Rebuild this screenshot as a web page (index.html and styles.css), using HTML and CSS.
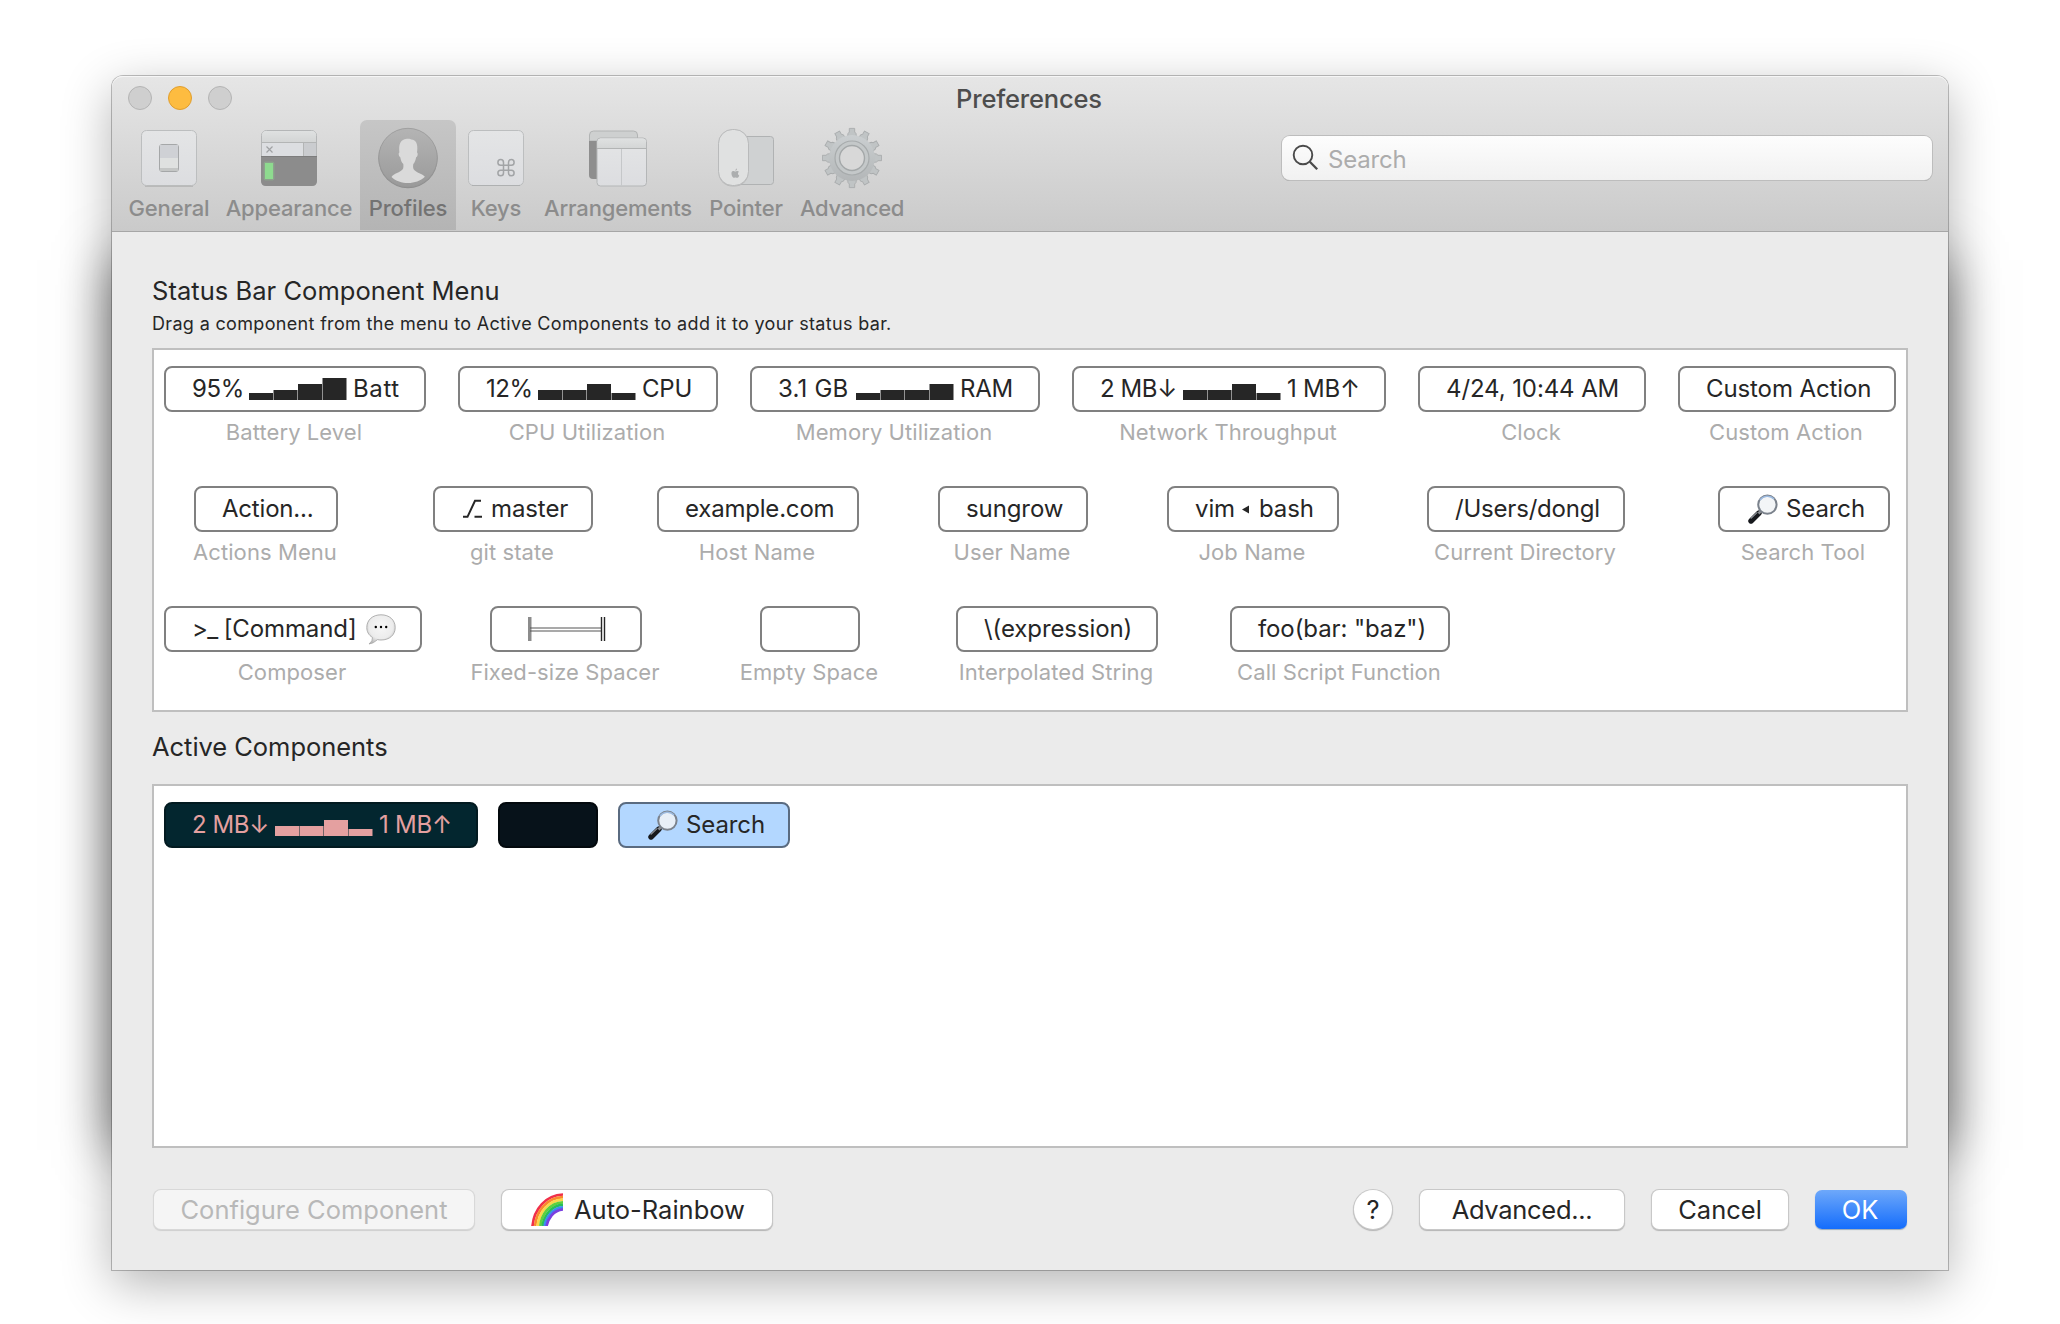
FILE: index.html
```html
<!DOCTYPE html>
<html lang="en">
<head>
<meta charset="utf-8">
<title>Preferences</title>
<link rel="stylesheet" href="styles.css">
</head>
<body>
<svg width="0" height="0" class="defs" aria-hidden="true">
  <defs>
    <linearGradient id="plate" x1="0" y1="0" x2="0" y2="1"><stop offset="0" stop-color="#e4e5e6"/><stop offset="1" stop-color="#dcdde0"/></linearGradient>
    <linearGradient id="bar" x1="0" y1="0" x2="0" y2="1"><stop offset="0" stop-color="#dfe1e1"/><stop offset="1" stop-color="#d3d5d5"/></linearGradient>
    <linearGradient id="disc" x1="0" y1="0" x2="0" y2="1"><stop offset="0" stop-color="#b4b4b4"/><stop offset="1" stop-color="#9a9a9a"/></linearGradient>
    <linearGradient id="steel" gradientUnits="userSpaceOnUse" x1="0" y1="-30" x2="0" y2="30"><stop offset="0" stop-color="#ced2d4"/><stop offset="1" stop-color="#b0b3b4"/></linearGradient>
    <radialGradient id="bubble" cx=".5" cy=".4" r=".6"><stop offset="0" stop-color="#f7f7f7"/><stop offset=".7" stop-color="#ececec"/><stop offset="1" stop-color="#bdbdbd"/></radialGradient>
    <path id="tooth" d="M-4.600-20-4-24.500-2.700-26v-3.600h5.400v3.600L4-24.500 4.600-20z" fill="#c0c4c5" stroke="#a9acad" stroke-width=".9"/>
    <symbol id="lens" viewBox="0 0 30 30">
      <path d="M3 27 11 19" stroke="#17191d" stroke-width="5.400" stroke-linecap="round"/>
      <path d="M3 24.200 9 18.600" stroke="#8b9097" stroke-width="1.200" stroke-linecap="round"/>
      <path d="M10.500 19.500 13 17" stroke="#8a8d92" stroke-width="2.600"/>
      <circle cx="19.400" cy="10.600" r="9.200" fill="#f1f3f6" fill-opacity=".85" stroke="#7b828c" stroke-width="2"/>
      <path d="M12 6A9.200 9.200 0 0 1 26 5" fill="none" stroke="#9dbbe0" stroke-width="1.600"/>
    </symbol>
  </defs>
</svg>
<div class="backdrop"></div>
<main class="window">
  <header class="toolbar">
    <div class="titlebar">
      <div class="lights"><i class="light"></i><i class="light amber"></i><i class="light"></i></div>
      <h1 class="title">Preferences</h1>
    </div>
    <div class="tools">
      <nav class="tabs">
        <div class="tab general">
          <svg width="60" height="64" viewBox="0 0 60 64"><rect x="2.500" y="4.500" width="55" height="55" rx="5" fill="url(#plate)" stroke="#bcbebf"/><path d="M6 60.300h48" stroke="#b3b3b3"/><rect x="20.500" y="18.500" width="19" height="27" rx="2.500" fill="#dfe1e0" stroke="#a5a7a8"/><path d="M21 19h18v13H21z" fill="#cfd1d5"/><path d="M21 42h18v3H21z" fill="#c4c6c5"/></svg>
          <span>General</span>
        </div>
        <div class="tab appearance">
          <svg width="60" height="64" viewBox="0 0 60 64"><rect x="2.500" y="4.500" width="55" height="55" rx="5" fill="#dcdee1" stroke="#b4b6b7"/><path d="M3 16V9q0-4 4-4h46q4 0 4 4v7z" fill="url(#bar)"/><path d="M3 16.500h54" stroke="#b3b5b5"/><path d="M44.500 17h12.500v13H44.500z" fill="#cacccf"/><path d="M44.500 17v13" stroke="#b3b5b5"/><path d="m7.500 20.500 6 6m0-6-6 6" stroke="#a0a2a4" stroke-width="1.200"/><path d="M2 30h56v25q0 5-5 5H7q-5 0-5-5z" fill="#8c8c8c"/><path d="M2 30.500h56" stroke="#7d7d7d"/><rect x="4.500" y="35.500" width="11" height="19" rx="2" fill="#8fe08f" opacity=".25"/><path d="M6 37h8v16H6z" fill="#8edb8f"/></svg>
          <span>Appearance</span>
        </div>
        <div class="tab profiles">
          <svg width="60" height="64" viewBox="0 0 60 64"><circle cx="30" cy="32.600" r="29.600" fill="#8e8e8e"/><circle cx="30" cy="31.600" r="29.300" fill="url(#disc)" stroke="#989898" stroke-width=".8"/><path d="M13.500 51c2-3.500 9-4.500 11.200-7.700.9-1.300.8-3.600.6-5.300-1.600-1.400-2.600-4-3-6.800-1.600-.5-2.200-4.200-.9-4.700-.8-7 .2-13 7.500-13.800 2.900-.2 4 .6 4.900.9 5.500.6 6.200 7 5.200 12.900 1.300.6.700 4.300-.9 4.700-.4 2.700-1.300 5.300-2.800 6.700-.3 1.900-.4 4.200.5 5.500 2.200 3.200 8.900 4.200 11.100 7.400-8.500 8.300-24.800 8.300-33.400.2z" fill="#dadada"/></svg>
          <span>Profiles</span>
        </div>
        <div class="tab keys">
          <svg width="60" height="64" viewBox="0 0 60 64"><rect x="2.500" y="4.500" width="55" height="55" rx="5" fill="url(#plate)" stroke="#bcbebf"/><path d="M6 59.500h48" stroke="#aeb0b1"/><path d="M37.500 39.200h5v5h-5zM37.500 39.200h-2.800a2.800 2.800 0 1 1 2.800-2.800zM42.500 39.200v-2.800a2.800 2.800 0 1 1 2.800 2.800zM42.500 44.200h2.800a2.800 2.800 0 1 1-2.800 2.800zM37.500 44.200v2.800a2.800 2.800 0 1 1-2.800-2.800z" fill="none" stroke="#a2a4a6" stroke-width="1.500"/></svg>
          <span>Keys</span>
        </div>
        <div class="tab arrangements">
          <svg width="60" height="64" viewBox="0 0 60 64"><path d="M1.500 15V9q0-4 4-4h40q4 0 4 4v6z" fill="#ced0d0" stroke="#b2b4b4"/><path d="M1 15h12v38H5q-4 0-4-4z" fill="#8e8e8e"/><rect x="9" y="12" width="49.500" height="48" rx="3.500" fill="url(#plate)" stroke="#b4b6b7"/><path d="M9.500 22.500V16q0-3.500 3.500-3.500h41.500q3.500 0 3.500 3.500v6.500z" fill="url(#bar)"/><path d="M9 22.500h49.500" stroke="#b2b4b4"/><path d="M33.500 23v36.500" stroke="#c5c7c9"/></svg>
          <span>Arrangements</span>
        </div>
        <div class="tab pointer">
          <svg width="60" height="64" viewBox="0 0 60 64"><rect x="22" y="10.500" width="35.500" height="48" rx="3" fill="#cfd1d2" stroke="#b0b2b3"/><rect x="2.500" y="3.500" width="30" height="57" rx="14" fill="#b8b8b8"/><rect x="2.500" y="3.500" width="30" height="56" rx="14" fill="#e0e1e1" stroke="#b9babb"/><path transform="translate(1 -.5)" d="M18.400 45.200c0-1.200.7-2 1.600-2.200.1 1.100-.6 2-1.600 2.200zM16.300 45.500c.9 0 1.300.5 2 .5s1.200-.5 2.100-.5c.6 0 1.200.3 1.500.8-1.500 1-1.200 3 .3 3.600-.4 1.200-1.200 2.400-2.100 2.400-.7 0-.9-.4-1.700-.4s-1 .4-1.700.4c-1.600 0-3.900-6.800-.4-6.800z" fill="#acaeaf"/></svg>
          <span>Pointer</span>
        </div>
        <div class="tab advanced">
          <svg width="60" height="64" viewBox="0 0 60 64"><g transform="translate(30 32)"><use href="#tooth"/><use href="#tooth" transform="rotate(30)"/><use href="#tooth" transform="rotate(60)"/><use href="#tooth" transform="rotate(90)"/><use href="#tooth" transform="rotate(120)"/><use href="#tooth" transform="rotate(150)"/><use href="#tooth" transform="rotate(180)"/><use href="#tooth" transform="rotate(210)"/><use href="#tooth" transform="rotate(240)"/><use href="#tooth" transform="rotate(270)"/><use href="#tooth" transform="rotate(300)"/><use href="#tooth" transform="rotate(330)"/><circle r="23" fill="url(#steel)"/><circle r="17" fill="#c4c8c9" stroke="#a7abac" stroke-width="1.200"/><circle r="12.500" fill="#d8d8d8" stroke="#a4a8a9" stroke-width="1.400"/></g></svg>
          <span>Advanced</span>
        </div>
      </nav>
      <div class="search">
        <svg width="28" height="28" viewBox="0 0 28 28" fill="none" stroke="#4a4a4a" stroke-width="1.900"><circle cx="11" cy="11" r="9.300"/><path d="m17.800 17.800 7.400 7.400" stroke-width="2.300"/></svg>
        <span>Search</span>
      </div>
    </div>
  </header>
  <section class="content">
    <h2 class="heading">Status Bar Component Menu</h2>
    <p class="hint">Drag a component from the menu to Active Components to add it to your status bar.</p>
    <div class="well menu">
      <div class="row first">
        <div class="cell"><div class="chip meter w262"><span class="lead batt">95%</span><svg class="spark" viewBox="0 0 98 22"><path d="M0 15h24v7H0zM24.500 12h24v10h-24zM49 6h24v16H49zM73.500 0h24v22h-24z"/></svg><span class="wide">Batt</span></div><p class="cap">Battery Level</p></div>
        <div class="cell"><div class="chip meter w260"><span class="lead cpu">12%</span><svg class="spark" viewBox="0 0 98 22"><path d="M0 12h24v10H0zM24.500 12h24v10h-24zM49 6h24v16H49zM73.500 15h24v7h-24z"/></svg><span>CPU</span></div><p class="cap">CPU Utilization</p></div>
        <div class="cell"><div class="chip meter w290"><span class="lead ram">3.1 GB</span><svg class="spark" viewBox="0 0 98 22"><path d="M0 15h24v7H0zM24.500 12h24v10h-24zM49 12h24v10H49zM73.500 6h24v16h-24z"/></svg><span>RAM</span></div><p class="cap">Memory Utilization</p></div>
        <div class="cell"><div class="chip meter w314"><span class="lead net">2 MB↓</span><svg class="spark" viewBox="0 0 98 22"><path d="M0 12h24v10H0zM24.500 12h24v10h-24zM49 6h24v16H49zM73.500 15h24v7h-24z"/></svg><span>1 MB↑</span></div><p class="cap">Network Throughput</p></div>
        <div class="cell"><div class="chip w228">4/24, 10:44 AM</div><p class="cap">Clock</p></div>
        <div class="cell"><div class="chip w218">Custom Action</div><p class="cap">Custom Action</p></div>
      </div>
      <div class="row second">
        <div class="cell"><div class="chip tight w144">Action...</div><p class="cap">Actions Menu</p></div>
        <div class="cell"><div class="chip w160"><svg class="branch" width="21" height="20" viewBox="0 0 21 20" fill="none" stroke="#262626" stroke-width="2"><path d="M1 17.800h4.500L13 1.800h6M12.500 17.800H20"/></svg><span>master</span></div><p class="cap">git state</p></div>
        <div class="cell"><div class="chip tight w202">example.com</div><p class="cap">Host Name</p></div>
        <div class="cell"><div class="chip w150">sungrow</div><p class="cap">User Name</p></div>
        <div class="cell"><div class="chip w172"><span>vim</span><svg class="back" width="7" height="9" viewBox="0 0 7 9"><path d="M0 4.500 7 .5v8z" fill="#262626"/></svg><span>bash</span></div><p class="cap">Job Name</p></div>
        <div class="cell"><div class="chip tight w198">/Users/dongl</div><p class="cap">Current Directory</p></div>
        <div class="cell"><div class="chip w172"><svg class="glass" width="30" height="30"><use href="#lens"/></svg><span>Search</span></div><p class="cap">Search Tool</p></div>
      </div>
      <div class="row third">
        <div class="cell"><div class="chip w258"><span class="prompt">&gt;_</span><span>[Command]</span><svg class="talk" width="30" height="31" viewBox="0 0 30 31"><path d="M3 30q4-3 3.500-6.500C2.500 21 .8 17.500.8 13.500.8 6 6.500.8 15 .8S29.200 6 29.200 13.500 23.500 26 15 26q-2 0-3.500-.4Q7.500 29.500 3 30z" fill="url(#bubble)" stroke="#a8a8a8" stroke-width=".9"/><circle cx="9.800" cy="13" r="1.200"/><circle cx="15" cy="13" r="1.200"/><circle cx="20.200" cy="13" r="1.200"/></svg></div><p class="cap">Composer</p></div>
        <div class="cell"><div class="chip w152"><svg class="spacer" width="78" height="26" viewBox="0 0 78 26"><path d="M0 1h3.500v24H0z" fill="#8c8c8c"/><path d="M2 12h72M2 15h72" stroke="#555" stroke-width="1.200"/><path d="M73.500 1v24M76.500 1v24" stroke="#262626" stroke-width="1.400"/></svg></div><p class="cap">Fixed-size Spacer</p></div>
        <div class="cell"><div class="chip w100"></div><p class="cap">Empty Space</p></div>
        <div class="cell"><div class="chip w202">\(expression)</div><p class="cap">Interpolated String</p></div>
        <div class="cell"><div class="chip w220">foo(bar: "baz")</div><p class="cap">Call Script Function</p></div>
      </div>
    </div>
    <h2 class="heading active-heading">Active Components</h2>
    <div class="well active">
      <div class="chip meter w314 teal"><span class="lead net">2 MB↓</span><svg class="spark" viewBox="0 0 98 22"><path d="M0 12h24v10H0zM24.500 12h24v10h-24zM49 6h24v16H49zM73.500 15h24v7h-24z"/></svg><span>1 MB↑</span></div>
      <div class="chip w100 night"></div>
      <div class="chip w172 picked"><svg class="glass" width="30" height="30"><use href="#lens"/></svg><span>Search</span></div>
    </div>
    <footer class="actions">
      <button class="btn configure" disabled>Configure Component</button>
      <button class="btn rainbow"><svg width="32" height="33" viewBox="0 0 32 33" fill="none" stroke-width="2.700"><path d="M1.500 33C3 16 15 2 32 1.500" stroke="#f0304a"/><path d="M4.100 33C5.500 18 16 4.600 32 4.100" stroke="#f98a2c"/><path d="M6.700 33C8 20 17 7.200 32 6.700" stroke="#fbd64a"/><path d="M9.300 33C10.500 22 18 9.800 32 9.300" stroke="#5fd03c"/><path d="M11.600 33C13 23 20 12.400 32 11.900" stroke="#27c057"/><path d="M13.600 33C15 25 21 14.900 32 14.400" stroke="#3b8df0"/><path d="M15.500 33C17 26 22 17.200 32 16.400" stroke="#7a3fe0"/></svg><span>Auto-Rainbow</span></button>
      <button class="btn help">?</button>
      <button class="btn more">Advanced...</button>
      <button class="btn cancel">Cancel</button>
      <button class="btn ok">OK</button>
    </footer>
  </section>
</main>
</body>
</html>
```
FILE: styles.css
```css
* { box-sizing: border-box; margin: 0; padding: 0; }
body {
  position: relative;
  width: 2060px;
  height: 1324px;
  padding: 76px 112px 0;
  overflow: hidden;
  background: #fff;
  color: #262626;
  font-family: Inter, "Liberation Sans", sans-serif;
}
svg { display: block; flex: none; }
.defs { position: absolute; }
.backdrop {
  position: absolute;
  left: 112px;
  top: 260px;
  width: 1836px;
  height: 890px;
  box-shadow: 0 0 50px rgba(0, 0, 0, .55);
}
.window {
  position: relative;
  width: 1836px;
  height: 1194px;
  border-radius: 11px 11px 0 0;
  background: #ebebeb;
  box-shadow: 0 0 0 1px rgba(0, 0, 0, .24), 0 14px 50px rgba(0, 0, 0, .3);
}
.toolbar {
  height: 156px;
  border-radius: 11px 11px 0 0;
  border-bottom: 1px solid #a6a6a6;
  background: linear-gradient(#e6e6e6, #cacaca);
  box-shadow: inset 0 1px #f6f6f6;
}
.titlebar { position: relative; height: 44px; }
.lights { display: flex; gap: 16px; padding: 10px 16px; }
.light { width: 24px; height: 24px; border: 1px solid #b4b4b4; border-radius: 50%; background: #cfcfcf; }
.amber { border-color: #e09e2e; background: #fdbc40; }
.title { position: absolute; inset: 0; padding-right: 2px; text-align: center; font-size: 25.5px; line-height: 46px; font-weight: 450; letter-spacing: -.18px; color: #4d4d4d; }
.tools { display: flex; justify-content: space-between; padding: 0 16px 0 8px; }
.tabs { display: flex; }
.tab { display: flex; flex-direction: column; align-items: center; height: 110px; padding-top: 6px; border-radius: 7px 7px 0 0; font-size: 22px; font-weight: 500; line-height: 28px; letter-spacing: -.15px; color: #8c8c8c; white-space: nowrap; }
.tab svg { margin-bottom: 4px; }
.general { width: 98px; }
.appearance { width: 142px; }
.profiles { width: 96px; background: linear-gradient(#c6c6c6, #b4b4b4); color: #737373; }
.keys { width: 80px; }
.arrangements { width: 164px; }
.pointer { width: 92px; }
.advanced { width: 120px; letter-spacing: -.3px; }
.search { display: flex; align-items: center; width: 650px; height: 44px; margin-top: 16px; padding-left: 10px; gap: 8px; border-radius: 8px; background: linear-gradient(#fdfdfd, #f1f1f1); box-shadow: 0 0 0 1px #bdbdbd, 0 1px 0 0 #9d9d9d; font-size: 24px; letter-spacing: -.2px; color: #acacac; }
.search span { padding-top: 2px; }
.content { padding: 43px 40px 0; }
.heading { height: 32px; font-size: 25.5px; font-weight: 400; line-height: 32px; letter-spacing: .04px; }
.hint { height: 24px; margin-top: 4px; font-size: 18px; line-height: 26px; letter-spacing: .33px; }
.well { border: 2px solid #bfbfbf; background: #fff; }
.menu { height: 364px; margin-top: 13px; padding: 16px 10px; }
.row { display: grid; height: 120px; white-space: nowrap; }
.first { grid-template-columns: 262px 260px 290px 314px 228px 218px; gap: 32px; }
.second { grid-template-columns: 204px 290px 200px 310px 170px 376px 180px; }
.third { grid-template-columns: 258px 288px 200px 294px 272px; }
.cell { display: flex; flex-direction: column; align-items: center; }
.chip { display: flex; align-items: center; gap: 7px; flex: none; height: 46px; padding-left: 26px; border: 2px solid #808080; border-radius: 8px; font-size: 24px; line-height: 42px; letter-spacing: -.1px; white-space: nowrap; }
.cap { height: 28px; margin-top: 6px; padding-right: 2px; font-size: 22px; line-height: 28px; letter-spacing: .08px; color: #acacac; }
.meter { gap: 6px; letter-spacing: -.2px; }
.tight { letter-spacing: -.2px; }
.wide { letter-spacing: .6px; }
.lead { margin-right: -6px; letter-spacing: -.4px; }
.batt { width: 57px; }
.cpu { width: 52px; }
.ram { width: 78px; letter-spacing: .2px; }
.net { width: 83px; }
.spark { width: 98px; height: 22px; fill: #262626; }
.branch { margin: 0 1px 0 1px; }
.back { margin-right: 3px; }
.glass { margin: 0 1px 0 2px; }
.prompt { margin-right: -1px; letter-spacing: -.6px; }
.talk { margin-left: 2px; }
.w100 { width: 100px; } .w144 { width: 144px; } .w150 { width: 150px; } .w152 { width: 152px; }
.w160 { width: 160px; } .w172 { width: 172px; } .w198 { width: 198px; } .w202 { width: 202px; }
.w218 { width: 218px; } .w220 { width: 220px; } .w228 { width: 228px; } .w258 { width: 258px; }
.w260 { width: 260px; } .w262 { width: 262px; } .w290 { width: 290px; } .w314 { width: 314px; }
.spacer { margin-left: 10px; }
.active-heading { margin-top: 19px; letter-spacing: -.04px; }
.active { display: flex; gap: 20px; height: 364px; margin-top: 21px; padding: 16px 10px; }
.teal { border-color: #021a20; background: #03262f; color: #e4a0a0; }
.teal .spark { fill: #e4a0a0; }
.night { border-color: #03090d; background: #07121a; }
.picked { border-color: #5a6b80; background: #b3d7ff; }
.actions { display: flex; margin-top: 42px; padding: 0 1px 0 2px; }
.btn { display: flex; align-items: center; justify-content: center; flex: none; height: 39px; border: 0; border-radius: 7px; background: #fff; box-shadow: 0 0 0 1px #c8c8c8, 0 1px 1px 1px #b4b4b4; color: #262626; font: 400 25.5px/39px Inter, "Liberation Sans", sans-serif; white-space: nowrap; }
.configure { width: 320px; background: #f5f5f5; color: #b8b8b8; box-shadow: 0 0 0 1px #d8d8d8, 0 1px 1px 1px #cfcfcf; }
.rainbow { width: 270px; margin-left: 28px; gap: 11px; padding-left: 2px; }
.help { width: 38px; margin-left: auto; border-radius: 50%; }
.more { width: 204px; margin-left: 28px; letter-spacing: -.3px; }
.cancel { width: 136px; margin-left: 28px; }
.ok { width: 92px; margin-left: 27px; padding-right: 2px; background: linear-gradient(#6ea8fa, #146dfc); box-shadow: 0 1px 1px #9ab; color: #fff; }
```
